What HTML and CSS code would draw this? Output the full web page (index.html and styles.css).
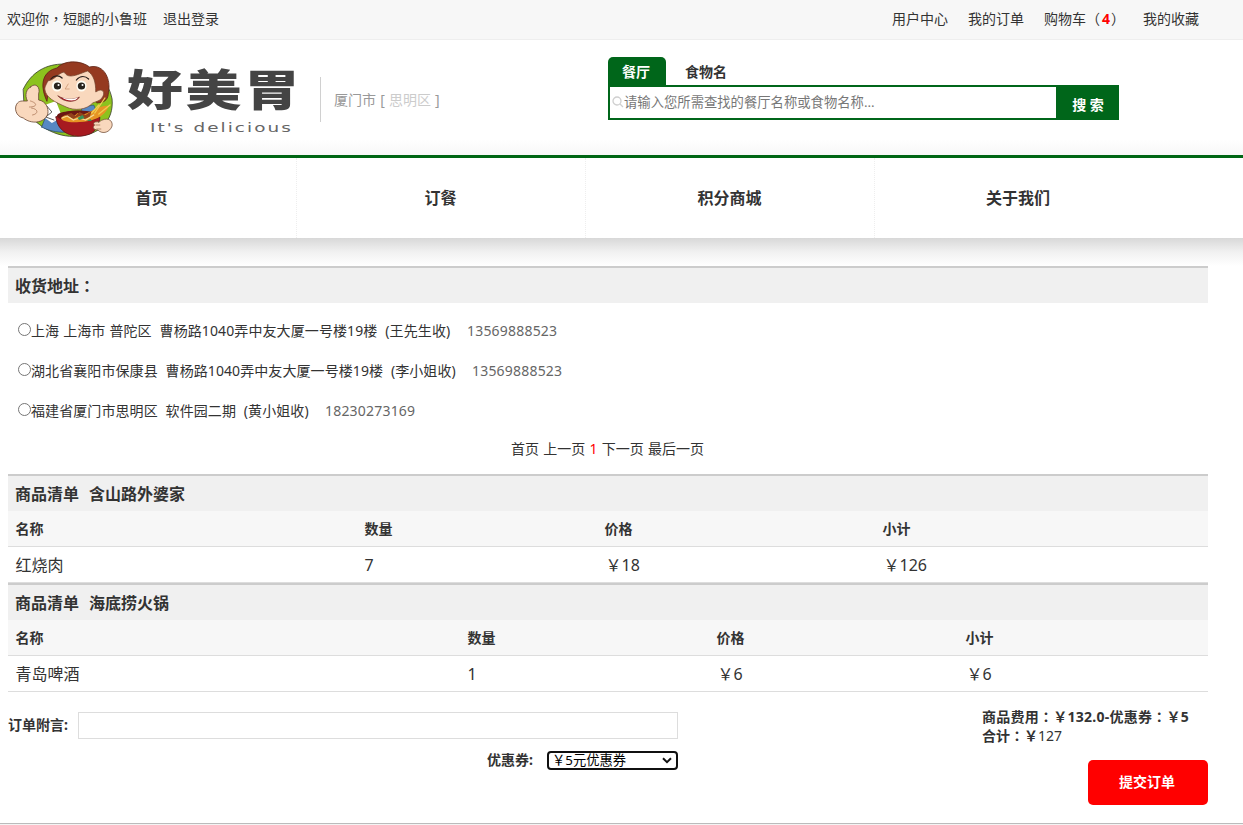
FILE: index.html
```html
<!DOCTYPE html>
<html lang="zh-CN">
<head>
<meta charset="utf-8">
<title>好美胃</title>
<link rel="stylesheet" href="styles.css">
</head>
<body>
<div class="topbar">
  <div class="topbar-side"><span>欢迎你<span class="punc" lang="zh-TW">，</span>短腿的小鲁班</span><a>退出登录</a></div>
  <div class="topbar-links"><a>用户中心</a><a>我的订单</a><a class="cart">购物车<span class="punc" lang="zh-TW">（</span><b>4</b><span class="punc" lang="zh-TW">）</span></a><a>我的收藏</a></div>
</div>
<header class="header">
  <svg class="logo" width="290" height="90" viewBox="0 0 290 90">
    <g stroke-linejoin="round" stroke-linecap="round" transform="translate(-2 -1) scale(1.020 1)">
      <path d="M17 34C25 17 39 9 57 9C82 6 100 23 104 44C106 66 91 80 71 81C48 84 27 68 18 54Z" fill="#8cc21e" stroke="#383d2c" stroke-width=".8"/>
      <path d="M35 72L42 53L50 47L49 58L58 77C50 78 40 75 35 72Z" fill="#5688c4" stroke="#26466b" stroke-width=".7"/>
      <path d="M38 50L49 46L55 62L45 68L37 62Z" fill="#fff"/>
      <path d="M75 52L86 50L92 64H72Z" fill="#5688c4" stroke="#26466b" stroke-width=".6"/>
      <path d="M40 51L45 57L39 62L47 65" fill="none" stroke="#333" stroke-width=".8"/>
      <path d="M40 46C32 28 37 16 50 13C57 5 73 5 82 12C94 9 101 20 101 32C100 40 101 44 95 47L89 48L86 29L43 29Z" fill="#953a20" stroke="#5f2415" stroke-width=".8"/>
      <path d="M41 26C48 25 51 18 57 17C61 25 71 19 80 16C86 20 88 27 88 37C95 32 98 38 94 43C92 46 87 47 85 48C79 55 67 56 59 52C48 47 39 43 38 34C38 31 40 29 41 26Z" fill="#f9d8bd" stroke="#74452d" stroke-width=".7"/>
      <path d="M44 24C47 20 52 20 55 23M69 25C73 20 78 21 81 24" fill="none" stroke="#281e1b" stroke-width="1.200"/>
      <ellipse cx="50" cy="31" rx="5" ry="5.500" fill="#fffdf3"/>
      <ellipse cx="74" cy="31" rx="5" ry="5.500" fill="#fffdf3"/>
      <circle cx="50.500" cy="31" r="3.600" fill="#29231d"/>
      <circle cx="74" cy="31" r="3.600" fill="#29231d"/>
      <circle cx="51.500" cy="30" r="1" fill="#fff"/>
      <circle cx="75" cy="30" r="1" fill="#fff"/>
      <path d="M61 29L58 34L62 34" fill="none" stroke="#ca9673" stroke-width=".8"/>
      <path d="M51 41C58 45 66 45 72 42C69 48 57 48 51 41Z" fill="#b41722" stroke="#66221d" stroke-width=".6"/>
      <path d="M55 42.500C61 44.500 66 44 71 42.500L68 45C63 46 58 45 55 42.500Z" fill="#fff"/>
      <path d="M49 62C59 54 79 54 92 62C92 71 86 79 79 80C67 84 50 78 49 62Z" fill="#a71a20" stroke="#61161a" stroke-width=".8"/>
      <ellipse cx="71" cy="61" rx="21" ry="5.500" fill="#6b1713"/>
      <path d="M54 63C61 56 64 66 70 58C77 65 88 49 101 51C97 62 84 67 72 67C62 68 54 66 54 63Z" fill="#e79524"/>
      <path d="M58 60L64 58L68 61L72 57L78 60L84 56L82 62L77 64L72 61L66 64Z" fill="#93411b"/>
      <path d="M55 63L60 61L66 65L72 63L78 65L86 60" fill="none" stroke="#f5dc9a" stroke-width="1.300"/>
      <path d="M70 63L75 60L77 63L72 65ZM79 66L83 64L84 66Z" fill="#389359"/>
      <path d="M84 58L91 50M87 58L97 43M91 59L102 50" stroke="#f1cd50" stroke-width="1.300"/>
      <path d="M24 32C29 27 34 32 32 39L32 45C39 46 42 53 41 59C37 69 24 69 17 63C7 61 7 46 16 46L21 46C18 40 20 34 24 32Z" fill="#f9d8bd" stroke="#68452f" stroke-width=".8"/>
      <path d="M24 46C31 48 31 52 23 52M25 53C32 54 32 59 26 60" fill="none" stroke="#a56f50" stroke-width=".7"/>
      <path d="M91 67C99 61 105 65 104 71C102 77 95 80 90 75C86 75 84 72 87 70C84 68 88 66 91 67Z" fill="#f9d8bd" stroke="#68452f" stroke-width=".7"/>
      <path d="M88 70H92M89 74H93" stroke="#98694d" stroke-width=".7"/>
    </g>
    <text class="brand" transform="translate(119 50) scale(1.300 1)" x="0 45 90" y="0">好美胃</text>
    <text class="tagline" transform="translate(142 76) scale(1.600 1)" x="0" y="0" textLength="88">It's delicious</text>
  </svg>
  <div class="city"><span>厦门市 [ <i>思明区</i> ]</span></div>
  <div class="search">
    <div class="tabs"><span class="tab active">餐厅</span><span class="tab">食物名</span></div>
    <div class="search-row">
      <div class="search-input">
        <svg width="12" height="12" viewBox="0 0 12 12" fill="none" stroke="#cfcfcf" stroke-width="1.300"><circle cx="5" cy="5" r="4"/><path d="M8 8L11 11"/></svg>
        <span>请输入您所需查找的餐厅名称或食物名称...</span>
      </div>
      <div class="search-button">搜 索</div>
    </div>
  </div>
</header>
<nav class="nav"><a>首页</a><a>订餐</a><a>积分商城</a><a>关于我们</a></nav>
<main class="main">
  <h2 class="bar">收货地址<span class="punc" lang="zh-TW">：</span></h2>
  <div class="addresses">
    <label class="address"><span class="radio"></span><span class="place place-a">上海 上海市 普陀区&nbsp; 曹杨路1040弄中友大厦一号楼19楼&nbsp; (王先生收)</span><em>13569888523</em></label>
    <label class="address"><span class="radio"></span><span class="place place-b">湖北省襄阳市保康县&nbsp; 曹杨路1040弄中友大厦一号楼19楼&nbsp; (李小姐收)</span><em>13569888523</em></label>
    <label class="address"><span class="radio"></span><span class="place place-c">福建省厦门市思明区&nbsp; 软件园二期&nbsp; (黄小姐收)</span><em>18230273169</em></label>
  </div>
  <div class="pager">首页 上一页 <b>1</b> 下一页 最后一页</div>
  <h2 class="bar">商品清单&nbsp; 含山路外婆家</h2>
  <div class="row head first"><span>名称</span><span>数量</span><span>价格</span><span>小计</span></div>
  <div class="row first"><span>红烧肉</span><span>7</span><span class="price">￥18</span><span class="price">￥126</span></div>
  <h2 class="bar">商品清单&nbsp; 海底捞火锅</h2>
  <div class="row head second"><span>名称</span><span>数量</span><span>价格</span><span>小计</span></div>
  <div class="row second"><span>青岛啤酒</span><span>1</span><span class="price">￥6</span><span class="price">￥6</span></div>
  <div class="checkout">
    <div class="order-form">
      <div class="remark"><label>订单附言:</label><div class="remark-input"></div></div>
      <div class="coupon"><label>优惠券:</label>
        <div class="select"><span>￥5元优惠券</span><svg width="10" height="7" viewBox="0 0 10 7"><path d="M1 1.300L5 5.200L9 1.300" fill="none" stroke="#111" stroke-width="2"/></svg></div>
      </div>
    </div>
    <div class="total">
      <div class="sum"><b class="fee">商品费用<span class="punc" lang="zh-TW">：</span>￥132.0-优惠券<span class="punc" lang="zh-TW">：</span>￥5</b><br><b>合计<span class="punc" lang="zh-TW">：</span>￥</b>127</div>
      <div class="submit">提交订单</div>
    </div>
  </div>
</main>
<footer class="footer"></footer>
</body>
</html>
```
FILE: styles.css
```css
* { box-sizing: border-box; }
body {
  margin: 0;
  height: 825px;
  overflow: hidden;
  background: #fff;
  color: #333;
  font: 14px/20px "Noto Sans", "Noto Sans CJK SC", sans-serif;
  white-space: nowrap;
}
.punc { font-family: "Noto Sans CJK TC", sans-serif; line-height: 1; }
.topbar {
  height: 40px;
  padding: 0 44px 2px 7px;
  display: flex;
  justify-content: space-between;
  align-items: baseline;
  line-height: 38px;
  background: #f7f7f7;
  border-bottom: 1px solid #eee;
}
.topbar-side { display: flex; gap: 16px; }
.topbar-links { display: flex; gap: 20px; }
.topbar b { color: #f00; margin: 0 1px 0 2px; }
.cart { width: 79px; }
.header {
  height: 115px;
  padding-left: 8px;
  display: flex;
  background: linear-gradient(#fff 86%, #f7f7f7);
}
.logo { margin-top: 16px; flex: none; }
.brand { font: 900 43px "Noto Sans CJK SC", sans-serif; fill: #444; }
.tagline { font: 11.5px "DejaVu Sans", sans-serif; fill: #666; }
.city {
  margin: 37px 0 0 22px;
  width: 288px;
  height: 45px;
  padding-left: 13px;
  border-left: 1px solid #d0d0d0;
  line-height: 46px;
  word-spacing: .5px;
  color: #999;
}
.city i { font-style: normal; color: #ccc; }
.search { width: 511px; margin-top: 17px; }
.tabs { display: flex; height: 28px; gap: 5px; }
.tab { padding: 0 14px; font-weight: bold; line-height: 29px; }
.tab.active { width: 58px; background: #00661a; color: #fff; border-radius: 5px 5px 0 0; }
.search-row { display: flex; height: 35px; }
.search-input {
  width: 448px;
  display: flex;
  align-items: center;
  padding: 0 0 2px 2px;
  border: 2px solid #00661a;
  border-right: 0;
  font-size: 13.33px;
  color: #777;
}
.search-button {
  width: 63px;
  padding-left: 1px;
  background: #00661a;
  color: #fff;
  font-weight: bold;
  text-align: center;
  line-height: 39px;
}
.nav {
  display: flex;
  height: 83px;
  padding-left: 8px;
  border-top: 3px solid #006614;
  background: #fff;
}
.nav a {
  width: 289px;
  padding-right: 1px;
  border-right: 1px dotted #eee;
  text-align: center;
  font-size: 16px;
  font-weight: 600;
  line-height: 80px;
}
.nav a:last-child { border: 0; padding-right: 3px; }
.main {
  padding: 28px 35px 0 8px;
  background: linear-gradient(#d8d8d8, #f1f1f1 14px, #fff 28px) top / 100% 28px no-repeat;
}
.bar {
  margin: 0;
  height: 37px;
  padding-left: 7px;
  background: #f0f0f0;
  border-top: 2px solid #ccc;
  font-size: 16px;
  font-weight: 600;
  line-height: 36px;
  word-spacing: .8px;
}
.addresses { padding: 8px 0 0 10px; }
.address { display: flex; align-items: center; height: 40px; }
.radio {
  width: 13px;
  height: 13px;
  margin-top: -3px;
  border: 1px solid #767676;
  border-radius: 50%;
}
.place { letter-spacing: .08px; word-spacing: .2px; }
.place-a { width: 436px; }
.place-b { width: 441px; }
.place-c { width: 294px; }
.place-a { letter-spacing: .1px; }
.address em { font-style: normal; color: #666; letter-spacing: .2px; }
.pager { height: 43px; padding-right: 1px; text-align: center; line-height: 36px; word-spacing: .6px; }
.pager b { color: #f00; font-weight: normal; }
.row {
  display: grid;
  height: 36px;
  padding-left: 7.5px;
  border-bottom: 1px solid #ddd;
  font-size: 16px;
  line-height: 36px;
}
.price { padding-left: 1px; }
.row.head { background: #f7f7f7; font-size: 14px; font-weight: bold; }
.first { grid-template-columns: 349px 240px 278px 1fr; }
.second { grid-template-columns: 452px 249px 249px 1fr; }
.checkout { display: flex; justify-content: space-between; height: 131px; padding-top: 15px; }
.order-form { width: 670px; padding-top: 5px; font-weight: bold; }
.remark { display: flex; justify-content: space-between; line-height: 26px; }
.remark-input { width: 600px; height: 27px; border: 1px solid #ddd; }
.coupon { display: flex; justify-content: flex-end; gap: 14px; padding-top: 12px; line-height: 18px; }
.select {
  width: 131px;
  height: 19px;
  padding: 0 4px 1px 3px;
  display: flex;
  align-items: center;
  justify-content: space-between;
  border: 2px solid #101010;
  border-radius: 4px;
  color: #000;
  font-size: 13.3px;
  font-weight: normal;
  line-height: 14px;
}
.total { width: 226px; }
.sum { line-height: 19px; }
.fee { letter-spacing: .25px; }
.submit {
  width: 120px;
  height: 45px;
  margin: 15px 0 0 auto;
  padding-right: 2px;
  background: #f00;
  border-radius: 5px;
  color: #fff;
  font-weight: bold;
  line-height: 44px;
  text-align: center;
}
.footer { height: 2px; border-top: 1px solid #bbb; background: #f3f3f3; }
```
